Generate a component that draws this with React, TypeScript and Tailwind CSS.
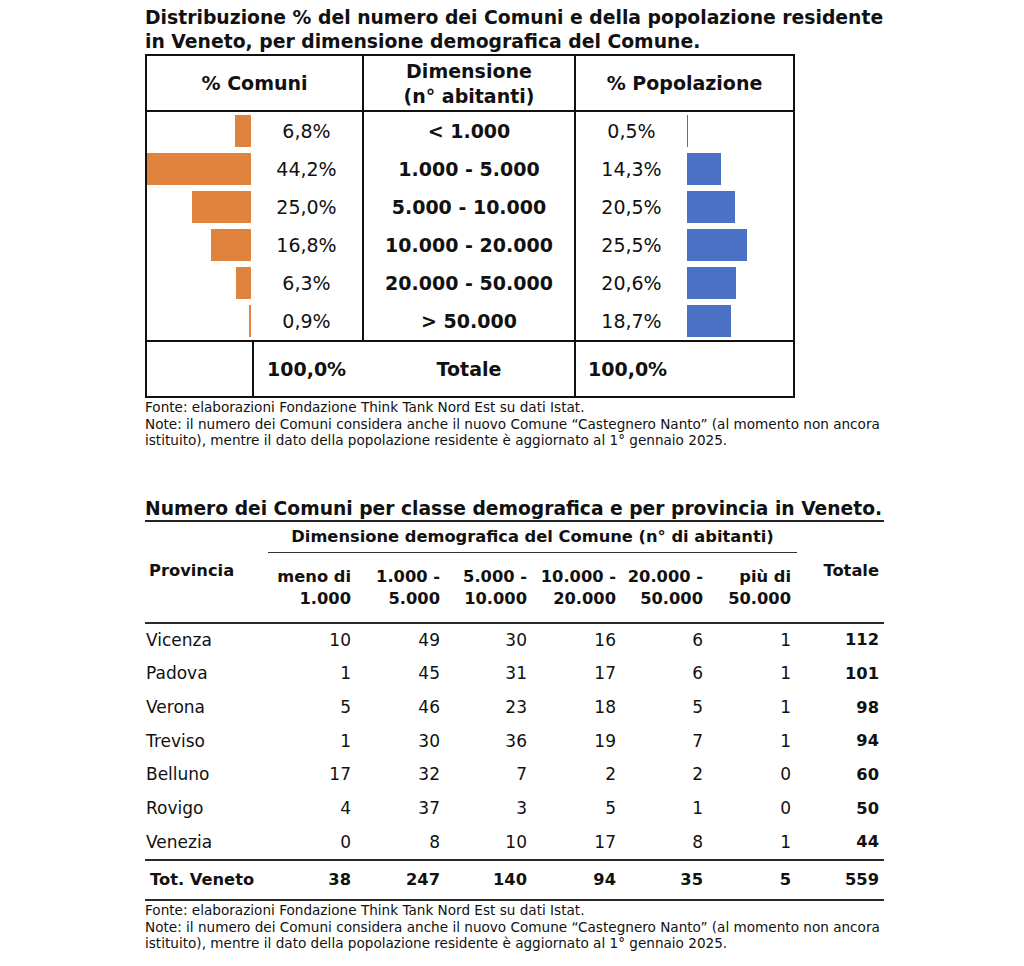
import React from "react";

const topRows = [
  { c: "6,8%", cv: 6.8, d: "< 1.000", p: "0,5%", pv: 0.5 },
  { c: "44,2%", cv: 44.2, d: "1.000 - 5.000", p: "14,3%", pv: 14.3 },
  { c: "25,0%", cv: 25.0, d: "5.000 - 10.000", p: "20,5%", pv: 20.5 },
  { c: "16,8%", cv: 16.8, d: "10.000 - 20.000", p: "25,5%", pv: 25.5 },
  { c: "6,3%", cv: 6.3, d: "20.000 - 50.000", p: "20,6%", pv: 20.6 },
  { c: "0,9%", cv: 0.9, d: "> 50.000", p: "18,7%", pv: 18.7 },
];

const subHeads: [string, string][] = [
  ["meno di", "1.000"],
  ["1.000 -", "5.000"],
  ["5.000 -", "10.000"],
  ["10.000 -", "20.000"],
  ["20.000 -", "50.000"],
  ["più di", "50.000"],
];

const subWidths = ["w-[86px]", "w-[89px]", "w-[87px]", "w-[89px]", "w-[87px]", "w-[88px]"];

const provRows: [string, number[], number][] = [
  ["Vicenza", [10, 49, 30, 16, 6, 1], 112],
  ["Padova", [1, 45, 31, 17, 6, 1], 101],
  ["Verona", [5, 46, 23, 18, 5, 1], 98],
  ["Treviso", [1, 30, 36, 19, 7, 1], 94],
  ["Belluno", [17, 32, 7, 2, 2, 0], 60],
  ["Rovigo", [4, 37, 3, 5, 1, 0], 50],
  ["Venezia", [0, 8, 10, 17, 8, 1], 44],
];

const totRow = [38, 247, 140, 94, 35, 5];

const SCALE = 2.36;

function Notes({ className = "" }: { className?: string }) {
  return (
    <div className={"text-[13.6px] leading-[16.5px] text-[#111] whitespace-nowrap " + className}>
      Fonte: elaborazioni Fondazione Think Tank Nord Est su dati Istat.
      <br />
      Note: il numero dei Comuni considera anche il nuovo Comune “Castegnero Nanto” (al momento non ancora
      <br />
      istituito), mentre il dato della popolazione residente è aggiornato al 1° gennaio 2025.
    </div>
  );
}

export default function App() {
  return (
    <div className="w-[1024px] h-[966px] bg-white text-black font-['DejaVu_Sans',sans-serif] overflow-hidden">
      <div className="ml-[145px] w-[739px] pt-[6px]">
        {/* Title 1 */}
        <div className="text-[18.8px] font-bold leading-[24px] whitespace-nowrap text-[#111]">
          Distribuzione % del numero dei Comuni e della popolazione residente
          <br />
          in Veneto, per dimensione demografica del Comune.
        </div>

        {/* Top table */}
        <div className="w-[650px] border-2 border-[#111] text-[19px] text-[#111]">
          {/* header */}
          <div className="flex h-[56px] border-b-2 border-[#111] font-bold">
            <div className="w-[217px] border-r-2 border-[#111] flex items-center justify-center">% Comuni</div>
            <div className="w-[212px] border-r-2 border-[#111] flex flex-col items-center justify-center leading-[25px] pt-[2px]">
              <span>Dimensione</span>
              <span>(n° abitanti)</span>
            </div>
            <div className="flex-1 flex items-center justify-center">% Popolazione</div>
          </div>
          {/* data rows */}
          {topRows.map((r) => (
            <div key={r.d} className="flex h-[38px]">
              <div className="w-[217px] border-r-2 border-[#111] flex">
                <div className="w-[104px] flex items-center justify-end">
                  <div className="h-[32px] bg-[#E2823F]" style={{ width: `${Math.max(1, Math.round(r.cv * SCALE))}px` }} />
                </div>
                <div className="flex-1 flex items-center justify-center">{r.c}</div>
              </div>
              <div className="w-[212px] border-r-2 border-[#111] flex items-center justify-center font-bold">{r.d}</div>
              <div className="flex-1 flex">
                <div className="w-[111px] flex items-center justify-center">{r.p}</div>
                <div className="flex-1 flex items-center justify-start">
                  <div className="h-[32px] bg-[#4A71C4]" style={{ width: `${Math.max(1, Math.round(r.pv * SCALE))}px` }} />
                </div>
              </div>
            </div>
          ))}
          {/* total row */}
          <div className="flex h-[56px] border-t-2 border-[#111] font-bold">
            <div className="w-[107px] border-r-2 border-[#111]" />
            <div className="w-[110px] flex items-center pl-[13px]">100,0%</div>
            <div className="w-[212px] border-r-2 border-[#111] flex items-center justify-center">Totale</div>
            <div className="flex-1 flex items-center pl-[12px]">100,0%</div>
          </div>
        </div>

        <Notes className="pt-[1px]" />

        {/* Title 2 */}
        <div className="mt-[49px] h-[24px] border-b-2 border-[#222] text-[18.7px] font-bold leading-[22px] whitespace-nowrap text-[#111]">
          Numero dei Comuni per classe demografica e per provincia in Veneto.
        </div>

        {/* Bottom table header */}
        <div className="flex h-[102px] border-b-2 border-[#2a2a2a] text-[16.3px] font-bold text-[#111]">
          <div className="w-[120px] pt-[39px] pl-[4px] leading-[20px]">Provincia</div>
          <div className="w-[526px]">
            <div className="ml-[3px] w-[529px] pt-[5px] pb-[5px] border-b-[1.5px] border-[#333] text-center leading-[20px] whitespace-nowrap">
              Dimensione demografica del Comune (n° di abitanti)
            </div>
            <div className="flex pt-[13px] leading-[22px]">
              {subHeads.map((h, i) => (
                <div key={i} className={subWidths[i] + " text-right whitespace-nowrap"}>
                  <div>{h[0]}</div>
                  <div>{h[1]}</div>
                </div>
              ))}
            </div>
          </div>
          <div className="w-[88px] pt-[39px] text-right leading-[20px]">Totale</div>
        </div>

        {/* Bottom table body */}
        <div className="text-[17px] text-[#111]">
          {provRows.map(([name, vals, tot]) => (
            <div key={name} className="flex h-[33.7px] items-center">
              <div className="w-[120px] pl-[1px]">{name}</div>
              {vals.map((v, i) => (
                <div key={i} className={subWidths[i] + " text-right"}>
                  {v}
                </div>
              ))}
              <div className="w-[88px] text-right font-bold text-[16.3px]">{tot}</div>
            </div>
          ))}
        </div>
        <div className="flex h-[42px] items-center border-t-2 border-b-2 border-[#2a2a2a] font-bold text-[16.3px] text-[#111]">
          <div className="w-[120px] pl-[5px]">Tot. Veneto</div>
          {totRow.map((v, i) => (
            <div key={i} className={subWidths[i] + " text-right"}>
              {v}
            </div>
          ))}
          <div className="w-[88px] text-right">559</div>
        </div>

        <Notes className="pt-[1px]" />
      </div>
    </div>
  );
}
